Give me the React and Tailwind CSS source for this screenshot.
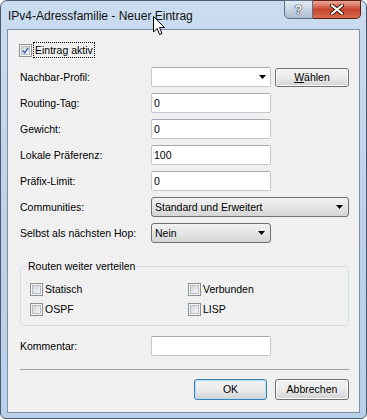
import React from 'react';

// Kleines Kontrollkästchen im Windows-7-Stil
const CheckBox = ({ checked }) => (
    <div className="w-[13px] h-[13px] border border-[#8e8f8f] bg-[#f4f4f4] p-[1px] flex-shrink-0">
        <div className="w-full h-full border border-[#b7bcc2] bg-gradient-to-br from-[#d2d5d9] to-[#f7f7f7] flex items-center justify-center">
            {checked && (
                <svg width="9" height="9" viewBox="0 0 9 9">
                    <path d="M1 4.5 L3.5 7.5 L8 1" fill="none" stroke="#3a5fa8" strokeWidth="1.8" />
                </svg>
            )}
        </div>
    </div>
);

const Arrow = () => (
    <svg width="7" height="4" viewBox="0 0 7 4" className="flex-shrink-0">
        <path d="M0 0 H7 L3.5 4 Z" fill="#000" />
    </svg>
);

const TextBox = ({ value, wide }) => (
    <div className={`h-[20px] ${wide ? 'w-[198px]' : 'w-[120px]'} bg-white border border-[#c3c7cd] border-t-[#a6aab0] rounded-[2px] flex items-center pl-[2px]`}>
        {value}
    </div>
);

// Dropdown-Liste mit Button-Optik
const DropDown = ({ value, wide }) => (
    <div className={`h-[20px] ${wide ? 'w-[198px]' : 'w-[120px]'} border border-[#707070] rounded-[3px] bg-gradient-to-b from-[#f2f2f2] via-[#e6e6e6] to-[#d4d4d4] flex items-center justify-between pl-[3px] pr-[5px]`}>
        <span>{value}</span>
        <Arrow />
    </div>
);

const Button = ({ children, isDefault, w }) => (
    <div className={`${w} h-[21px] rounded-[3px] border ${isDefault ? 'border-[#3c7fb1] shadow-[inset_0_0_0_1px_#b6e0f8]' : 'border-[#707070] shadow-[inset_0_0_0_1px_#fcfcfc]'} bg-gradient-to-b from-[#f2f2f2] via-[#ebebeb] to-[#d2d2d2] flex items-center justify-center`}>
        {children}
    </div>
);

const Row = ({ label, children }) => (
    <div className="flex items-center h-[20px]">
        <div className="w-[131px]">{label}</div>
        {children}
    </div>
);

const CheckItem = ({ label }) => (
    <div className="flex items-center h-[13px] gap-[2px]">
        <CheckBox />
        <span>{label}</span>
    </div>
);

export default function App() {
    return (
        <div className="w-[367px] h-[420px] bg-white font-['Liberation_Sans',Arial,sans-serif] text-black">
            <div className="relative w-[367px] h-[419px] rounded-t-[7px] rounded-b-[6px] border border-[#4a5a6c] bg-gradient-to-b from-[#cadcf0] via-[#bed3eb] to-[#b9d0ea] flex flex-col">
                {/* Titelleiste */}
                <div className="h-[28px] flex items-start justify-between pl-[7px] pr-[5px]">
                    <div className="text-[12px] leading-[16px] pt-[7px] text-[#111]">IPv4-Adressfamilie - Neuer Eintrag</div>
                    <div className="flex -mt-px">
                        <div className="w-[29px] h-[19px] rounded-bl-[5px] border border-[#5d6f86] bg-gradient-to-b from-[#e4ecf5] via-[#c8d5e4] to-[#aebdd0] flex items-center justify-center text-[13px] font-bold leading-none text-white [text-shadow:0_0_1px_#222,0_0_1px_#222,0_0_1px_#222]">?</div>
                        <div className="w-[48px] h-[19px] rounded-br-[5px] border border-l-0 border-[#5a1d14] bg-gradient-to-b from-[#e9a898] via-[#c9452c] to-[#d86a4e] flex items-center justify-center">
                            <svg width="14" height="11" viewBox="0 0 14 11">
                                <path d="M2 1.5 L12 9.5 M12 1.5 L2 9.5" stroke="#3a1510" strokeWidth="4" strokeLinecap="round" />
                                <path d="M2 1.5 L12 9.5 M12 1.5 L2 9.5" stroke="#fff" strokeWidth="2.2" strokeLinecap="round" />
                            </svg>
                        </div>
                    </div>
                </div>

                {/* Mauszeiger */}
                <svg className="absolute left-[152px] top-[15px]" width="13" height="20" viewBox="0 0 13 20">
                    <path d="M0.5 0.5 L0.5 16 L4 12.5 L6.6 18.5 L9 17.5 L6.5 11.5 L11.5 11.5 Z" fill="#fff" stroke="#000" strokeWidth="1" />
                </svg>

                {/* Client-Bereich */}
                <div className="mx-[6px] h-[384px] border border-[#7f90a6] bg-[#f0f0f0] pl-[12px] pr-[10px] pt-[12px] text-[10.5px] leading-[13px]">
                    <div className="flex items-center h-[16px]">
                        <div className="-ml-px"><CheckBox checked /></div>
                        <div className="ml-[1px] border border-dotted border-black px-[1px] h-[16px] flex items-center">Eintrag aktiv</div>
                    </div>

                    <div className="mt-[9px] flex flex-col gap-[6px]">
                        <Row label="Nachbar-Profil:">
                            <div className="h-[20px] w-[120px] bg-white border border-[#c3c7cd] border-t-[#a6aab0] rounded-[2px] flex items-center justify-end pr-[4px]">
                                <Arrow />
                            </div>
                            <div className="ml-[4px]">
                                <Button w="w-[74px] !h-[19px]">
                                    <span><span className="underline">W</span>ählen</span>
                                </Button>
                            </div>
                        </Row>
                        <Row label="Routing-Tag:"><TextBox value="0" /></Row>
                        <Row label="Gewicht:"><TextBox value="0" /></Row>
                        <Row label="Lokale Präferenz:"><TextBox value="100" /></Row>
                        <Row label="Präfix-Limit:"><TextBox value="0" /></Row>
                        <Row label="Communities:"><DropDown value="Standard und Erweitert" wide /></Row>
                        <Row label="Selbst als nächsten Hop:"><DropDown value="Nein" /></Row>
                    </div>

                    <fieldset className="mt-[17px] border border-[#d5dfe5] rounded-[3px] pb-[9px]">
                        <legend className="ml-[6px] px-[1px] leading-[13px]">Routen weiter verteilen</legend>
                        <div className="pt-[10px] pl-[9px] grid grid-cols-[158px_1fr] gap-y-[7px]">
                            <CheckItem label="Statisch" />
                            <CheckItem label="Verbunden" />
                            <CheckItem label="OSPF" />
                            <CheckItem label="LISP" />
                        </div>
                    </fieldset>

                    <div className="mt-[10px]">
                        <Row label="Kommentar:"><TextBox value="" /></Row>
                    </div>

                    <div className="mt-[13px] h-px bg-[#a0a0a0]" />

                    <div className="mt-[9px] flex justify-end gap-[8px]">
                        <Button isDefault w="w-[73px]">OK</Button>
                        <Button w="w-[74px]">Abbrechen</Button>
                    </div>
                </div>
            </div>
        </div>
    );
}
